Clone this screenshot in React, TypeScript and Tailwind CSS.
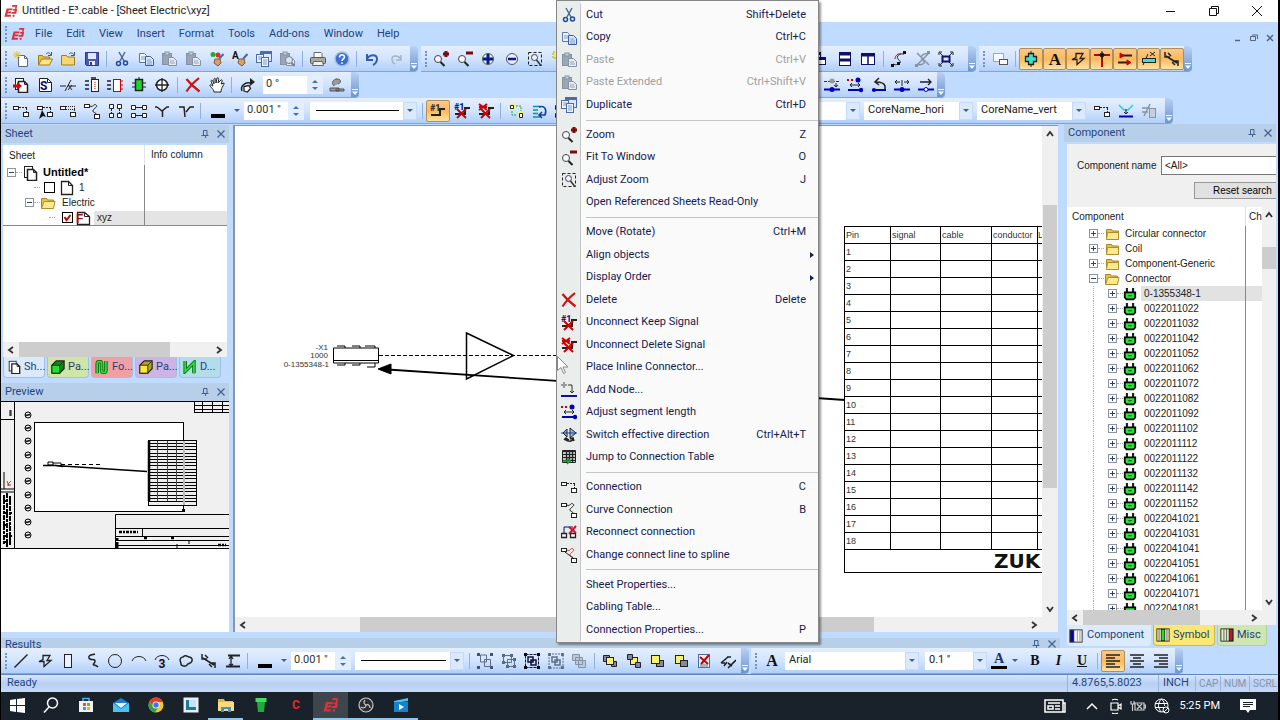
import type { ReactNode } from "react";

/* ============================================================================
   E³.cable — schematic editor with docked panels and the open context menu.
   ========================================================================== */

/* ---------------------------------------------------------------- icons --- */

const X_RED = <path d="M3 6l9 9M12 6l-9 9" stroke="#c00" strokeWidth="2" />;
const SMALL_BOXES = (
  <>
    <rect x="0.5" y="3.5" width="5" height="3" fill="#fff" />
    <rect x="10.5" y="9.5" width="5" height="4" fill="#fff" />
  </>
);
const CURVE_BOXES = (
  <>
    <rect x="0.5" y="1.5" width="5" height="3" fill="#fff" />
    <rect x="10.5" y="11.5" width="5" height="4" fill="#fff" />
  </>
);
const CLIPBOARD = (
  <>
    <rect x="1.5" y="2.5" width="9" height="11" fill="#9aa5b5" stroke="#8592a5" />
    <rect x="4" y="1" width="4" height="3" fill="#c9d0da" stroke="#8592a5" />
    <path d="M7.5 6.5h5l3 3v5h-8z" fill="#e6eaf0" stroke="#8592a5" />
    <path d="M9 10h4M9 12h5" stroke="#9aa5b5" />
  </>
);
const MAGNIFIER = (
  <>
    <circle cx="5" cy="8" r="3.5" fill="#f4f8ff" stroke="#444" />
    <path d="M7.5 11l4 4" stroke="#222" strokeWidth="2" />
  </>
);
const SHEETS = (
  <>
    <rect x="2.5" y="1.5" width="8" height="11" fill="#fff" />
    <path d="M5.5 4.5h6l3 3v8h-9z" fill="#fff" strokeWidth="1.5" />
    <path d="M11.5 4.5v3h3" />
  </>
);
const SEGMENT = (
  <>
    <path d="M0 12.5h16" stroke="#0000b8" strokeWidth="2" />
    <circle cx="8" cy="12.5" r="2.5" fill="#0000b8" stroke="none" />
  </>
);
const E3_MARK = (
  <g fill="#d9343c" stroke="none">
    <path d="M3 5h7l-.6 2.2H5.2L4.800 8.6h3.7L8 10.6H4.2l-.4 1.6h4.4L7.6 14.5H.5z" />
    <path d="M9.5 1h5.8l-1 4.3 .6 1.2-1 4.5H8.4l.5-2h3l.4-1.7h-2.2l.4-1.7h2.2L13 3H9z" />
    <circle cx="11" cy="13.5" r="1.3" />
  </g>
);
const GROUP_FRAME = (
  <path d="M0 0h3v3H0zM13 0h3v3h-3zM0 13h3v3H0zM13 13h3v3h-3z" fill="currentColor" stroke="none" />
);

const ICONS: Record<string, ReactNode> = {
  e3: E3_MARK,
  new: (
    <>
      <path d="M5.5 4.5h6l3 3v8h-9z" fill="#fff" stroke="#5a6a85" />
      <path d="M11.5 4.5v3h3" stroke="#5a6a85" />
      <path d="M4 0v8M0 4h8M1 1l6 6M7 1L1 7" stroke="#e3c424" />
    </>
  ),
  open: (
    <>
      <path d="M1.5 14V4.5h4l1 1.5h6v3" fill="#e9c04a" stroke="#a67c14" />
      <path d="M1.5 14l3-6h11l-3 6z" fill="#ffe48a" stroke="#a67c14" />
      <path d="M9 3c2-2 4-1 5 1M14.5 1v3.5H11" stroke="#2a5ba8" />
    </>
  ),
  folderUp: (
    <>
      <path d="M1.5 14V4.5h5l1 1.5h7v8z" fill="#f5d772" stroke="#a67c14" />
      <path d="M9 3c2-2 4-1 5 1M14.5 1v3.5H11" stroke="#2a5ba8" />
    </>
  ),
  save: (
    <>
      <path d="M1.5 1.5h13v13h-12l-1-1z" fill="#4b57b8" stroke="#2e3788" />
      <rect x="4" y="2" width="8" height="6" fill="#dfe9fa" stroke="none" />
      <rect x="5" y="10" width="6" height="4" fill="#eee" stroke="none" />
      <rect x="6" y="11" width="2" height="3" fill="#2e3788" stroke="none" />
    </>
  ),
  cut: (
    <>
      <path d="M5 1l5 9M11 1L6 10" stroke="#4b6a9c" strokeWidth="1.5" />
      <circle cx="4.5" cy="12.5" r="2" stroke="#1f4a96" strokeWidth="1.5" />
      <circle cx="11.5" cy="12" r="2" stroke="#1f4a96" strokeWidth="1.5" />
    </>
  ),
  copy: (
    <>
      <path d="M1.5 2.5h5l2 2v7h-7z" fill="#eef4ff" stroke="#5a78ad" />
      <path d="M7.5 5.5h5l3 3v6h-8z" fill="#d8e6ff" stroke="#3c5e9c" />
      <path d="M3 6h4M3 8h4M9 9h4M9 11h5M9 13h5" stroke="#7d9bd0" />
    </>
  ),
  paste: CLIPBOARD,
  colorBrush: (
    <>
      <circle cx="4" cy="3.5" r="2.5" fill="#1fae2c" stroke="none" />
      <circle cx="9" cy="4" r="2.5" fill="#d93232" stroke="none" />
      <path d="M14.5 3L10 8" stroke="#4b6a9c" strokeWidth="2" />
      <path d="M6 8l5 0 1 4-3 3-4-3z" fill="#d9a066" stroke="#8a5a2b" />
    </>
  ),
  textBrush: (
    <>
      <text x="0" y="8" fontSize="10" fontWeight="bold" fill="#111" stroke="none">A</text>
      <path d="M15.5 3L11 8" stroke="#4b6a9c" strokeWidth="2" />
      <path d="M7 8l5 0 1 4-3 3-4-3z" fill="#d9a066" stroke="#8a5a2b" />
    </>
  ),
  duplicate: (
    <>
      <rect x="4.5" y="0.5" width="11" height="10" fill="#dbe7fb" stroke="#4b6ca8" />
      <path d="M5 2h10" stroke="#4b6ca8" strokeWidth="2" />
      <rect x="0.5" y="3.5" width="7" height="8" fill="#eef4ff" stroke="#4b6ca8" />
      <rect x="5.5" y="6.5" width="7" height="9" fill="#eef4ff" stroke="#4b6ca8" />
      <path d="M2 6h4M2 8h3M7 9h4M7 11h4M7 13h4" stroke="#7d9bd0" />
    </>
  ),
  findPage: (
    <>
      {CLIPBOARD}
      <circle cx="10" cy="9" r="3.5" fill="#dfe5ee" stroke="#77839a" />
      <path d="M12.5 12l3 3" stroke="#77839a" strokeWidth="2" />
    </>
  ),
  print: (
    <>
      <path d="M4 6V1.5h7l1 1V6" fill="#fff" stroke="#666" />
      <rect x="0.5" y="6.5" width="15" height="6" rx="1" fill="#a9a9a0" stroke="#555" />
      <path d="M3.5 10.5h9l1 4h-11z" fill="#eee" stroke="#666" />
    </>
  ),
  help: (
    <>
      <circle cx="8" cy="8" r="7" fill="#3c6fd0" stroke="#a9bfe6" strokeWidth="1.5" />
      <path d="M5.5 6.5c0-3.5 5-3.5 5-.5 0 2-2.5 1.8-2.5 4M8 11.5v1.5" stroke="#fff" strokeWidth="1.6" />
    </>
  ),
  undo: <path d="M3 3v6h6M3 8c3-5 10-5 10 0 0 3-2 5-4 6" stroke="#3060b0" strokeWidth="2" />,
  redo: <path d="M13 4v5H8M13 8C10 4 4 4 4 8c0 3 1 4 3 5" stroke="#a9b4c6" strokeWidth="1.5" />,
  zoomIn: (
    <>
      {MAGNIFIER}
      <path d="M13 0v6M10 3h6" stroke="#7c0a0a" strokeWidth="3" />
    </>
  ),
  zoomOut: (
    <>
      {MAGNIFIER}
      <path d="M9 2h7" stroke="#7c0a0a" strokeWidth="3" />
    </>
  ),
  plusCircle: (
    <>
      <circle cx="8" cy="8" r="5.5" fill="#e8eefc" stroke="#555" />
      <path d="M8 3v10M3 8h10" stroke="#0a1a8a" strokeWidth="3" />
    </>
  ),
  minusCircle: (
    <>
      <circle cx="8" cy="8" r="5.5" fill="#e8eefc" stroke="#555" />
      <path d="M4 8h8" stroke="#0a1a8a" strokeWidth="2.5" />
    </>
  ),
  adjustZoom: (
    <>
      <rect x="1.5" y="1.5" width="13" height="13" strokeDasharray="3 2" />
      <circle cx="7.5" cy="6.5" r="3" fill="#eef4ff" stroke="#444" />
      <path d="M9.5 9l4 5" stroke="#333" strokeWidth="1.5" />
    </>
  ),
  yellowTool: (
    <>
      <rect x="2" y="1" width="6" height="6" fill="#f6ee60" stroke="#b8a820" strokeDasharray="2 1" />
      <rect x="7.5" y="8.5" width="5" height="6" />
    </>
  ),
  cascade: (
    <>
      <rect x="0.5" y="1.5" width="7" height="5" fill="#fff" stroke="#10106a" />
      <rect x="4.5" y="6.5" width="8" height="7" fill="#fff" stroke="#10106a" />
      <path d="M1 3h7M5 8h8" stroke="#10106a" strokeWidth="2" />
    </>
  ),
  tileH: (
    <>
      <rect x="2.5" y="1.5" width="11" height="13" fill="#fff" stroke="#10106a" />
      <path d="M2 3h12M2 9h12" stroke="#10106a" strokeWidth="3" />
    </>
  ),
  tileV: (
    <>
      <rect x="1.5" y="2.5" width="13" height="11" fill="#fff" stroke="#10106a" />
      <path d="M1 4h14" stroke="#10106a" strokeWidth="3" />
      <path d="M8 2v12" stroke="#10106a" strokeWidth="1.5" />
    </>
  ),
  splineTool: (
    <>
      <path d="M2 13c4 2 10-1 6-4s0-7 5-6" />
      <path d="M4 8c0-4 4-6 6-5" stroke="#c00" />
      <path d="M12 0h3v3h-3zM0 13h3v3H0zM6 11h3v3H6z" fill="#111" stroke="none" />
    </>
  ),
  splineOff: (
    <>
      <path d="M2 13c4 2 10-1 6-4s0-7 5-6M2 2l12 12M14 2L2 14" stroke="#8793a5" strokeWidth="1.5" />
      <path d="M12 0h3v3h-3zM0 13h3v3H0z" fill="#8793a5" stroke="none" />
    </>
  ),
  fitFrame: (
    <>
      <path d="M1 4V1h3M12 1h3v3M1 12v3h3M12 15h3v-3M2 2l3 3M14 2l-3 3M2 14l3-3M14 14l-3-3" />
      <rect x="4.5" y="5.5" width="7" height="5" fill="#dbe7fb" stroke="#10106a" strokeWidth="2" />
    </>
  ),
  windows: (
    <>
      <rect x="1.5" y="2.5" width="10" height="8" fill="#f6f9ff" stroke="#9aa9c0" />
      <rect x="7.5" y="8.5" width="8" height="5" fill="#fff" stroke="#555" />
    </>
  ),
  chip: (
    <>
      <path d="M5.5 2.5h5v3h3v5h-3v3h-5v-3h-3v-5h3z" fill="#3fe0d0" strokeWidth="1.3" />
      <path d="M8 0v2M8 14v2" />
    </>
  ),
  textA: (
    <text x="8" y="14" textAnchor="middle" fontFamily="Liberation Serif, serif" fontSize="17" fontWeight="bold" fill="#111" stroke="none">
      A
    </text>
  ),
  polygon: <path d="M6 2.5h7l-3 5h4l-7 6v-5H2l4-2z" strokeWidth="1.3" />,
  junction: (
    <>
      <path d="M0 4h16M8 4v12" stroke="#c00" strokeWidth="2" />
      <path d="M8 0v8M4 4h8" />
      <circle cx="8" cy="4" r="2" fill="#111" />
    </>
  ),
  arrowsRed: (
    <>
      <path d="M5 4.5h10M1 11.5h10" stroke="#222" strokeWidth="2" />
      <path d="M3 2l4 2.5L3 7zM10 9l4 2.5-4 2.5z" fill="#c00" stroke="#c00" />
    </>
  ),
  ruler: (
    <>
      <path d="M2 14L7 3M9 5l5-4M9 1l5 4" />
      <rect x="1.5" y="7.5" width="13" height="4" fill="#3fe0d0" />
    </>
  ),
  measure: (
    <path d="M2 5l11 7M1 1v5h5M4 2l3 3M14 15v-5H9M11 14l-3-3" strokeWidth="1.5" />
  ),
  importSheet: (
    <>
      {SHEETS}
      <path d="M0 9h5" stroke="#d00" strokeWidth="3" />
      <path d="M4 5l5 4-5 4z" fill="#d00" stroke="none" />
    </>
  ),
  sSheet: (
    <>
      <path d="M2.5 1.5h8l4 4v9h-12z" fill="#fff" />
      <path d="M10.5 1.5v4h4" />
      <text x="3" y="13" fontSize="12" fontWeight="bold" fill="#0a0a6a" stroke="none">S</text>
    </>
  ),
  wireLabel: <path d="M0 9h6M9 9h7M5 14l6-11M8 13l4-5M8 8l4 5" />,
  blockDark: (
    <>
      <rect x="7.5" y="2.5" width="7" height="12" fill="#fff" />
      <path d="M1 4h4M1 8h4M1 12h4M7 1h5" strokeWidth="1.5" />
      <path d="M11 5v7" stroke="#c00" strokeDasharray="1 1" />
    </>
  ),
  blockRed: (
    <>
      <rect x="6.5" y="2.5" width="7" height="12" fill="#fff" stroke="#c00" />
      <path d="M0 4h4M0 8h4M0 12h4" strokeWidth="1.5" />
      <path d="M14 4h2M14 8h2M14 12h2" stroke="#c00" />
    </>
  ),
  blockGreen: (
    <>
      <rect x="4.5" y="2.5" width="7" height="11" fill="#1ed62e" strokeWidth="1.5" />
      <path d="M1 6h3M1 10h3M12 6h3M12 10h3M8 0v2" />
    </>
  ),
  target: (
    <>
      <circle cx="8" cy="8" r="5.5" fill="#fff" strokeWidth="1.5" />
      <path d="M8 1v14M1 8h14" strokeWidth="1.3" />
    </>
  ),
  delete: <path d="M1.5 2c3 4 7 8 13 12.5M14 1C9 5 5 9 1.5 14.5" stroke="#cc1111" strokeWidth="2.2" />,
  hand: (
    <path
      d="M5 15c0-3-5-6-4-7s2 1 3 1L2 4c1-2 2 0 3 3L5 2c1-2 2 0 2 4l1-5c2-1 2 1 1 5l3-3c2-1 1 2 0 4l3-1c1 1-3 4-3 9z"
      fill="#fff"
    />
  ),
  rotate: (
    <>
      <path d="M3 14c-2-5 3-9 8-8" strokeWidth="1.5" />
      <path d="M11 1l5 4-5 4z" fill="#222" stroke="none" />
      <path d="M5 9.5l5-1 1.5 3-3 3.500-3.500-1z" fill="#fff" strokeWidth="1.3" />
    </>
  ),
  stamp: (
    <path d="M5 9c-3-3-1-7 3-7 5 0 4 4 1 5M1 11h9v3H1zM7 12h8v2H7z" fill="#9a9a9a" stroke="#555" />
  ),
  conn: (
    <>
      {SMALL_BOXES}
      <path d="M6 4.5h8M13.5 5v4" strokeDasharray="2 1" />
    </>
  ),
  connPick: (
    <>
      {SMALL_BOXES}
      <path d="M6 4.5h8M13.5 5v4" strokeDasharray="2 1" />
      <path d="M5 7l4 7-3-1-4 3z" fill="#111" stroke="none" />
    </>
  ),
  connMulti: (
    <>
      {SMALL_BOXES}
      <path d="M6 3.5h9M6 6.5h9M14.5 5v4" strokeDasharray="1 1" />
    </>
  ),
  curve: (
    <>
      {CURVE_BOXES}
      <path d="M6 3c3 2 4-3 6-1 3 2-4 4-3 6 0 2 3 1 3 3" />
    </>
  ),
  fourV: (
    <>
      <path d="M2.5 1.5h4v4h-4zM10.5 1.5h4v4h-4zM2.5 10.5h4v4h-4zM10.5 10.5h4v4h-4z" fill="#fff" />
      <path d="M4.5 6v5M12.5 6v5" strokeDasharray="2 1" />
    </>
  ),
  fourH: (
    <>
      <path d="M0.5 2.5h4v4h-4zM11.5 2.5h4v4h-4zM0.5 10.5h4v4h-4zM11.5 10.5h4v4h-4z" fill="#fff" />
      <path d="M5 4.5h6M5 12.5h6" />
    </>
  ),
  branchY: <path d="M3 4l5 4 5-4h2M1 4h2M8.500 8v6" strokeWidth="1.5" />,
  branchR: <path d="M1 4h5l1 10M8 9l4-5h4" strokeWidth="1.5" />,
  lineColor: <rect x="1" y="11" width="14" height="4" fill="#000" stroke="none" />,
  signal: (
    <>
      <text x="0" y="8" fontSize="9" fontWeight="bold" fill="#222" stroke="none">#1</text>
      <path d="M1 12h9V6h5" strokeWidth="2" />
    </>
  ),
  unconnectKeep: (
    <>
      <text x="0" y="7" fontSize="9" fontWeight="bold" fill="#0a0a6a" stroke="none">#1</text>
      <path d="M1 11h10V5h5" strokeWidth="2" />
      {X_RED}
    </>
  ),
  unconnectDelete: (
    <>
      <path d="M1 11h10V5h5" strokeWidth="2" />
      <path d="M1 1l8 6M9 1L1 7M1 4h8" stroke="#c00" strokeWidth="2" />
      {X_RED}
    </>
  ),
  routeYellow: (
    <>
      <path d="M1 1h6v6H1zM10 8h5v7h-5z" fill="#f3f080" stroke="none" />
      <path d="M2.5 2.5h3v3h-3zM11.5 10.5h3v4h-3z" fill="#fff" />
      <path d="M8 3h5v5M4 8v4h5" stroke="#16a34a" strokeDasharray="2 1" />
    </>
  ),
  swap: (
    <>
      <path d="M1 3.5h7M1 7h5M1 10.500h5M1 14h7" stroke="#099" strokeWidth="1.5" />
      <path d="M7 4c6-2 8 3 6 8H8M10 9l-3 3 3 3" stroke="#123c9a" strokeWidth="1.5" />
    </>
  ),
  addNode: (
    <>
      <path d="M3 0v6M0 3h6" stroke="#9a9a9a" strokeWidth="2" />
      <path d="M7 3h4v8M9 9l2 2 2-2" stroke="#333" />
      <path d="M0 14h16" stroke="#10109a" strokeWidth="2" />
    </>
  ),
  segMove: (
    <>
      {SEGMENT}
      <path d="M0 4.500h16" stroke="#334" strokeDasharray="3 1" />
      <circle cx="8" cy="4" r="2.500" fill="#999" stroke="none" />
      <path d="M12 6v4M10 8l2 2 2-2" />
    </>
  ),
  segLength: (
    <>
      <path d="M0 3h7" stroke="#c00" strokeWidth="2" strokeDasharray="2 2" />
      <circle cx="11" cy="3" r="2.5" fill="#0000c0" stroke="none" />
      <path d="M3 8h10M5 6L3 8l2 2M11 6l2 2-2 2" />
      <path d="M1 13h13" stroke="#0000b8" strokeWidth="2" />
      <circle cx="14" cy="13" r="2.2" fill="#0000c0" stroke="none" />
    </>
  ),
  segBack: (
    <>
      <path d="M14 13V9c-1-4-7-4-9-4M8 1L4 5l4 3" strokeWidth="1.5" />
      <path d="M1 13h14" stroke="#0000b8" strokeWidth="2" />
      <circle cx="3" cy="13" r="2" fill="#0000c0" stroke="none" />
    </>
  ),
  segSplit: (
    <>
      {SEGMENT}
      <path d="M1 5h5M10 5h5M3 3L1 5l2 2M13 3l2 2-2 2M8 3v6" />
    </>
  ),
  segOpen: (
    <>
      <path d="M2 5h11M10 2l3 3-3 3" strokeWidth="1.3" />
      <path d="M0 12.5h16" stroke="#0000b8" strokeWidth="2" />
      <circle cx="8" cy="12.5" r="2" fill="#fff" stroke="#0000b8" />
    </>
  ),
  direction: (
    <>
      <path d="M2 6l4-4v8zM15 6L9 1v10z" fill="#9db6d8" />
      <path d="M0 6h16" stroke="#123c9a" />
      <path d="M4 11c1 4 7 4 8 1M3 13l2-2 3 2M13 14l-1-3-3 1" strokeWidth="1.5" />
    </>
  ),
  table: (
    <>
      <path d="M1.500 1.500h13v12h-13z" fill="#fff" />
      <path d="M2 2.500h12M2 5.500h12M2 8.500h12M2 11.500h12M5.500 2v11M8.500 2v11M11.500 2v11" strokeWidth="1.300" />
      <path d="M2 12h6M6 9l3 3-3 3" stroke="#17a333" strokeWidth="1.500" />
    </>
  ),
  reconnect: (
    <>
      <path d="M3 10V3h9" stroke="#10106a" />
      <path d="M0.5 9.5h5v4h-5zM9.5 9.5h5v4h-5z" fill="#fff" strokeWidth="1.3" />
      <path d="M8 3l7 6M15 2l-7 8" stroke="#d01030" strokeWidth="2" />
    </>
  ),
  toSpline: (
    <>
      {CURVE_BOXES}
      <path d="M6 3c3 2 4-3 6-1 3 2-4 4-3 6 0 2 3 1 3 3" stroke="#d33" />
      <path d="M4 5l8 6" />
    </>
  ),
  coreDown: (
    <>
      <path d="M1 2l5 5h4l5-5" stroke="#22cfe0" strokeWidth="1.5" />
      <path d="M8 6v5M6 9l2 2 2-2" />
      <path d="M1 13.5h14" stroke="#0000b8" strokeWidth="2" />
    </>
  ),
  coreOff: (
    <>
      <path d="M1 5h8M1 9h6M3 13L9 1" stroke="#8793a5" strokeWidth="1.5" />
      <rect x="8.5" y="5.5" width="6" height="9" fill="#c5cfdd" stroke="#8793a5" />
    </>
  ),
  line: <path d="M1.5 14.5l13-13" strokeWidth="1.5" />,
  rect: <rect x="4.5" y="1.5" width="7" height="13" fill="#eaf2ff" />,
  spline: <path d="M11 1c-4 1-7 1-6 4s6 0 6 3-3 3-1 4 2 0 4 2" strokeWidth="1.5" />,
  circle: <circle cx="8" cy="8" r="6.5" />,
  arc: <path d="M1 8c2-6 12-6 14 0" />,
  arc3: (
    <>
      <path d="M1 7c2-6 12-6 14 0" />
      <text x="8" y="15" textAnchor="middle" fontSize="12" fontWeight="bold" fill="#111" stroke="none">3</text>
    </>
  ),
  cloud: <path d="M5 4c3-3 5 0 6 0s4 1 3 4-4 2-5 4-6 1-6-1-3-6 2-7z" strokeWidth="1.5" />,
  height: (
    <>
      <path d="M3 2.5h12M1 13.5h14" strokeWidth="2" />
      <path d="M6 4v9M4 6l2-3 2 3M4 11l2 2 2-2" strokeWidth="1.3" />
    </>
  ),
  group: (
    <g className="text-slate-600">
      {GROUP_FRAME}
      <path d="M3.5 2h6v7h-6zM7.5 6.5h6v7h-6z" stroke="#5f6f88" />
    </g>
  ),
  ungroup: (
    <>
      <path d="M1 1h3v3H1zM9 1h3v3H9zM1 8h3v3H1zM12 12h3v3h-3zM5 12h3v3H5zM12 5h3v3h-3z" fill="#55647c" stroke="none" />
      <path d="M2.5 2.5h8v7h-8zM6.5 6.5h7v7h-7z" stroke="#5f6f88" />
    </>
  ),
  groupAll: (
    <g className="text-black">
      {GROUP_FRAME}
      <path d="M1.500 1.500h13v13h-13z" stroke="#10103a" strokeDasharray="3 1" />
      <path d="M4 4h5v5H4zM7 7h5v5H7z" stroke="#10103a" strokeWidth="1.5" />
    </g>
  ),
  groupDash: (
    <g className="text-slate-500">
      {GROUP_FRAME}
      <path d="M1 1h14v14H1z" stroke="#5f6f88" strokeDasharray="2 1" />
      <path d="M4 4h5v5H4zM7 7h5v5H7z" stroke="#5f6f88" strokeWidth="1.5" />
    </g>
  ),
  copies: (
    <path d="M1.5 1.5h7v6h-7zM4.5 4.5h7v7h-7zM7.5 7.5h7v7h-7z" fill="#bcc9dc" stroke="#8793a5" />
  ),
  toFront: (
    <>
      <path d="M1.5 2.5h6v6h-6zM9.5 8.5h5v5h-5z" fill="#808a9a" />
      <rect x="4.5" y="4.5" width="7" height="7" fill="#f8f36a" />
    </>
  ),
  toBack: (
    <>
      <rect x="4.5" y="4.5" width="7" height="7" fill="#f8f36a" />
      <path d="M1.5 1.5h5v5h-5zM9.5 9.5h5v5h-5z" fill="#808a9a" />
    </>
  ),
  forward: (
    <>
      <rect x="7.5" y="7.5" width="7" height="6" fill="#808a9a" />
      <rect x="2.5" y="2.5" width="8" height="8" fill="#f8f36a" />
    </>
  ),
  backward: (
    <>
      <rect x="2.5" y="2.5" width="8" height="8" fill="#f8f36a" />
      <rect x="7.5" y="7.5" width="7" height="6" fill="#808a9a" />
    </>
  ),
  report: (
    <>
      <rect x="2.5" y="1.5" width="11" height="13" fill="#e9eef8" stroke="#4b6ca8" />
      <path d="M4 12h8M4 14h8" stroke="#777" />
      <path d="M4 4l8 7M13 2L5 11" stroke="#c00" strokeWidth="2" />
    </>
  ),
  hatch: <path d="M1 10l7-6M4 13l3-4M8 15l8-8M11 4l-4 0M1 10h4M8 10l4 3" strokeWidth="1.6" />,
  alignLeft: <path d="M1 2h14M1 5h9M1 8h14M1 11h9M1 14h14" strokeWidth="1.7" />,
  alignCenter: <path d="M1 2h14M4 5h8M1 8h14M4 11h8M1 14h14" strokeWidth="1.7" />,
  alignRight: <path d="M1 2h14M6 5h9M1 8h14M6 11h9M1 14h14" strokeWidth="1.7" />,
  sheets: SHEETS,
  page: (
    <>
      <path d="M2.5 1.5h7l4 4v9h-11z" fill="#fff" strokeWidth="1.3" />
      <path d="M9.5 1.5v4h4" />
    </>
  ),
  pageF: (
    <>
      <path d="M2.5 2.5h7l5 4v8h-12z" fill="#fff" strokeWidth="1.3" />
      <path d="M9.5 2.5v4h5" />
      <text x="1" y="13" fontSize="12" fontWeight="bold" fill="#a01020" stroke="none">F</text>
    </>
  ),
  folder: (
    <>
      <path d="M1.5 13V3.5h5l1 1.5h6v8z" fill="#e8c34a" stroke="#a5832a" />
      <path d="M1.5 13.5L4 6.5h11l-1.5 7z" fill="#ffe98f" stroke="#b08d2c" />
    </>
  ),
  folderClosed: (
    <>
      <path d="M2.5 13V3.5h5l1 1.5h6v8z" fill="#e8c34a" stroke="#a5832a" />
      <path d="M2.5 13.5l1-7h11v7z" fill="#ffe98f" stroke="#b08d2c" />
    </>
  ),
  plug: (
    <>
      <path d="M4.5 1v5M11.5 1v5" strokeWidth="2.5" />
      <path d="M2 6h12v6l-2 2H4l-2-2z" fill="#26e636" stroke="#000" strokeWidth="2" />
      <path d="M6 10h4" />
    </>
  ),
  cubeGreen: (
    <>
      <path d="M1 6l5-5h9v9l-5 5H1z" fill="#0c8a16" strokeWidth="1.3" />
      <path d="M1 6h9v9H1z" fill="#1ee02e" />
      <path d="M10 6l5-5" />
    </>
  ),
  cubeYellow: (
    <>
      <path d="M1 6l5-5h9v9l-5 5H1z" fill="#b3a31a" strokeWidth="1.3" />
      <path d="M1 6h9v9H1z" fill="#fbea35" />
      <path d="M10 6l5-5" />
    </>
  ),
  coil: (
    <>
      <path d="M2.5 15V4c0-3 5-3 5 0v8c0 3 5 3 5 0V1" stroke="#0a6a12" strokeWidth="4" />
      <path d="M2.5 15V4c0-3 5-3 5 0v8c0 3 5 3 5 0V1" stroke="#25e03a" strokeWidth="2" />
    </>
  ),
  zig: (
    <>
      <path d="M2.5 1v12l10-10v12" stroke="#0a6a12" strokeWidth="4" />
      <path d="M2.5 1v12l10-10v12" stroke="#25e03a" strokeWidth="2" />
    </>
  ),
  bookBlue: (
    <>
      <rect x="1" y="1" width="14" height="14" fill="#fff" stroke="#222" />
      <rect x="1.5" y="1.5" width="4" height="13" fill="#0000c0" />
      <path d="M9.5 1v14M12.5 1v14" stroke="#888" />
    </>
  ),
  bookGreen: (
    <>
      <rect x="1" y="1" width="14" height="14" fill="#fff7c0" stroke="#222" />
      <rect x="6" y="1.5" width="4" height="13" fill="#1ee02e" />
      <path d="M3.5 1v14M12.5 1v14" stroke="#555" />
    </>
  ),
  bookRed: (
    <>
      <rect x="1" y="1" width="14" height="14" fill="#dff0c8" stroke="#222" />
      <rect x="10.5" y="1.5" width="4" height="13" fill="#d01020" />
      <path d="M4.5 1v14M7.5 1v14" stroke="#555" />
    </>
  ),
};

function Icon({ name, className = "size-4" }: { name: string; className?: string }) {
  return (
    <svg viewBox="0 0 16 16" className={`${className} shrink-0`} fill="none" stroke="#222" aria-hidden="true">
      {ICONS[name]}
    </svg>
  );
}

/* ------------------------------------------------------ toolbar widgets --- */

function Tools({ names, active = false }: { names: string[]; active?: boolean }) {
  return (
    <div className="flex shrink-0 items-center">
      {names.map((name) => (
        <button
          key={name}
          type="button"
          aria-label={name}
          className={`flex h-[22px] items-center justify-center odd:w-6 even:w-[23px] ${
            active ? "rounded-xs border border-[#b08f5c] bg-linear-to-b from-[#fcc98a] via-[#fbb95c] to-[#fde3a0]" : ""
          }`}
        >
          <Icon name={name} />
        </button>
      ))}
    </div>
  );
}

function Sep() {
  return <span className="mx-[3px] h-4 w-px shrink-0 bg-[#8fb0e0]" />;
}

/** One docked toolbar strip: grip on the left, overflow tab on the right. */
function Toolbar({ children, className = "" }: { children: ReactNode; className?: string }) {
  return (
    <div
      role="toolbar"
      className={`flex h-[26px] shrink-0 items-center rounded-r-sm border-b border-[#7fa6dc] bg-linear-to-b from-[#e4effe] via-[#d3e4fd] to-[#b1cffa] ${className}`}
    >
      <span className="mr-0.5 ml-1 h-4 w-0 border-l-2 border-dotted border-[#7193c4]" />
      <div className="flex min-w-0 flex-1 items-center">{children}</div>
      <span className="flex h-full w-2 shrink-0 items-end justify-center rounded-r-sm bg-linear-to-b from-[#b9d1f5] to-[#6b95d0] pb-0.5">
        <svg viewBox="0 0 6 6" className="size-1.5" fill="#fff" aria-hidden="true">
          <path d="M0 0h6v1H0zM0 2.5h6L3 6z" />
        </svg>
      </span>
    </div>
  );
}

function Spin({ label, value, unit }: { label: string; value: string; unit: string }) {
  return (
    <div className="flex h-[18px] w-[60px] shrink-0 items-center bg-white">
      <input
        aria-label={label}
        defaultValue={`${value} ${unit}`}
        className="w-[44px] min-w-0 bg-transparent pl-[3px] text-[11px] text-[#333] outline-none"
      />
      <span className="flex h-full w-4 flex-col items-center justify-evenly bg-[#e2edfd]">
        <svg viewBox="0 0 6 3" className="h-[3px] w-1.5" fill="#4b6fa8" aria-hidden="true">
          <path d="M0 3l3-3 3 3z" />
        </svg>
        <svg viewBox="0 0 6 3" className="h-[3px] w-1.5" fill="#4b6fa8" aria-hidden="true">
          <path d="M0 0l3 3 3-3z" />
        </svg>
      </span>
    </div>
  );
}

function Combo({
  label,
  value,
  className,
  line = false,
}: {
  label: string;
  value: string;
  className: string;
  line?: boolean;
}) {
  return (
    <div className={`relative flex h-[18px] shrink-0 items-center bg-white ${className}`}>
      <select
        aria-label={label}
        className="h-full w-full appearance-none bg-transparent pr-4 pl-1 text-[11px] text-[#222] outline-none"
      >
        <option>{value}</option>
      </select>
      {line && <span className="absolute inset-x-1.5 mr-3 h-px bg-black" />}
      <span className="pointer-events-none absolute right-0 flex h-full w-3.5 items-center justify-center border border-[#c5daf8] bg-[#dbe9fd]">
        <Caret />
      </span>
    </div>
  );
}

function Caret() {
  return (
    <svg viewBox="0 0 6 3" className="h-[3px] w-1.5 shrink-0" fill="#3f5f95" aria-hidden="true">
      <path d="M0 0h6L3 3z" />
    </svg>
  );
}

/* --------------------------------------------------------------- chrome --- */

const MENUS = ["File", "Edit", "View", "Insert", "Format", "Tools", "Add-ons", "Window", "Help"];

function TitleBar() {
  return (
    <header className="shrink-0">
      <div className="flex h-[22px] items-center bg-white pr-4 pl-[3px]">
        <Icon name="e3" className="size-3.5" />
        <h1 className="ml-1 text-[11px] text-[#222]">Untitled - E³.cable - [Sheet Electric\xyz]</h1>
        <div className="ml-auto flex items-center gap-[33px]">
          <button type="button" aria-label="Minimize">
            <svg viewBox="0 0 10 10" className="size-2.5" stroke="#111" aria-hidden="true">
              <path d="M0 5.5h9" />
            </svg>
          </button>
          <button type="button" aria-label="Restore">
            <svg viewBox="0 0 10 10" className="size-2.5" fill="none" stroke="#111" aria-hidden="true">
              <path d="M.5 2.5h7v7h-7zM2.5 2V.5h7v7H8" />
            </svg>
          </button>
          <button type="button" aria-label="Close">
            <svg viewBox="0 0 10 10" className="size-2.5" stroke="#111" aria-hidden="true">
              <path d="M0 0l10 10M10 0L0 10" />
            </svg>
          </button>
        </div>
      </div>
      <nav className="flex h-6 items-center pr-1 pl-1">
        <span className="h-4 border-l-2 border-dotted border-[#7193c4]" />
        <span className="mr-2.5 ml-1">
          <Icon name="e3" className="size-3.5" />
        </span>
        <div className="flex gap-3.5">
          {MENUS.map((menu) => (
            <button key={menu} type="button" className="text-[11px] text-[#23437c]">
              {menu}
            </button>
          ))}
        </div>
        <div className="mt-2 ml-auto flex gap-2 text-[#56657c]">
          <svg viewBox="0 0 8 8" className="size-2" stroke="currentColor" strokeWidth="1.5" aria-hidden="true">
            <path d="M1 6.5h5" />
          </svg>
          <svg viewBox="0 0 8 8" className="size-2" fill="none" stroke="currentColor" aria-hidden="true">
            <path d="M.5 2.5h5v4h-5zM2 1h5.5v4" />
          </svg>
          <svg viewBox="0 0 8 8" className="size-2" stroke="currentColor" strokeWidth="1.5" aria-hidden="true">
            <path d="M1 1l6 6M7 1L1 7" />
          </svg>
        </div>
      </nav>
    </header>
  );
}

function Toolbars() {
  return (
    <div className="shrink-0">
      <div className="flex gap-[3px]">
        <Toolbar className="w-[417px]">
          <Tools names={["new", "open", "folderUp", "save"]} />
          <Sep />
          <Tools names={["cut", "copy"]} />
          <Tools names={["paste"]} />
          <Tools names={["paste", "colorBrush", "textBrush", "duplicate", "findPage"]} />
          <Sep />
          <Tools names={["print", "help"]} />
          <Sep />
          <Tools names={["undo", "redo"]} />
        </Toolbar>
        <Toolbar className="w-[555px]">
          <Tools names={["zoomIn", "zoomOut", "plusCircle", "minusCircle", "adjustZoom", "yellowTool"]} />
          <div className="mr-2.5 ml-auto flex items-center">
            <Tools names={["cascade", "tileH", "tileV"]} />
            <Sep />
            <Tools names={["splineTool", "splineOff", "fitFrame"]} />
          </div>
        </Toolbar>
        <Toolbar className="w-[213px]">
          <span className="w-px" />
          <Tools names={["windows"]} />
          <Sep />
          <Tools active names={["chip", "textA", "polygon", "junction", "arrowsRed", "ruler", "measure"]} />
        </Toolbar>
      </div>
      <div className="flex">
        <Toolbar className="w-[358px]">
          <Tools names={["importSheet", "sSheet", "wireLabel", "blockDark", "blockRed", "blockGreen", "target"]} />
          <Sep />
          <Tools names={["delete", "hand"]} />
          <Sep />
          <Tools names={["rotate"]} />
          <span className="w-1" />
          <Spin label="Rotation" value="0" unit="°" />
          <span className="w-0.5" />
          <Tools names={["stamp"]} />
        </Toolbar>
        <Toolbar className="ml-auto mr-[333px] w-[180px]">
          <div className="ml-auto">
            <Tools names={["swap", "segMove", "segLength", "segBack", "segSplit", "segOpen"]} />
          </div>
        </Toolbar>
      </div>
      <Toolbar className="mr-[105px]">
        <Tools names={["conn", "connPick", "connMulti", "curve", "fourV", "fourH", "branchY", "branchR"]} />
        <Sep />
        <span className="w-0.5" />
        <Tools names={["lineColor"]} />
        <span className="flex w-3.5 justify-center">
          <Caret />
        </span>
        <Spin label="Line width" value="0.001" unit="''" />
        <span className="w-1.5" />
        <Combo label="Line style" value="" line className="w-[107px]" />
        <span className="w-0.5" />
        <Sep />
        <Tools active names={["signal"]} />
        <Tools names={["unconnectKeep", "unconnectDelete"]} />
        <Sep />
        <Tools names={["routeYellow", "swap", "fourH"]} />
        <div className="mr-1 ml-auto flex items-center gap-1">
          <Combo label="Name" value="" className="w-[107px]" />
          <Combo label="Horizontal core text" value="CoreName_hori" className="w-[109px]" />
          <Combo label="Vertical core text" value="CoreName_vert" className="w-[109px]" />
          <Tools names={["conn", "coreDown", "coreOff"]} />
        </div>
      </Toolbar>
    </div>
  );
}

/** Dock header with its pin and close glyphs. */
function DockHeader({ title }: { title: string }) {
  return (
    <div className="flex h-[18px] shrink-0 items-center bg-[#b7cfe9] px-1 text-[11px] text-[#1f4484]">
      <h2>{title}</h2>
      <DockButtons />
    </div>
  );
}

function DockButtons() {
  return (
    <div className="ml-auto flex items-center gap-2">
      <button type="button" aria-label="Auto hide">
        <svg viewBox="0 0 8 8" className="size-2" fill="none" stroke="#42608f" aria-hidden="true">
          <path d="M2.5 5V.5h3.5V5M0.5 5.5h7M4.5 5v3" />
        </svg>
      </button>
      <button type="button" aria-label="Close panel">
        <svg viewBox="0 0 8 8" className="size-2" stroke="#42608f" strokeWidth="1.2" aria-hidden="true">
          <path d="M.5.5l7 7M7.5.5l-7 7" />
        </svg>
      </button>
    </div>
  );
}

function Arrow({ dir }: { dir: "up" | "down" | "left" | "right" }) {
  const paths = {
    up: "M1 6l3-4 3 4",
    down: "M1 2l3 4 3-4",
    left: "M6 1L2 4l4 3",
    right: "M2 1l4 3-4 3",
  };
  return (
    <span className="flex size-4 shrink-0 items-center justify-center">
      <svg viewBox="0 0 8 8" className="size-2" fill="none" stroke="#333" strokeWidth="1.8" aria-hidden="true">
        <path d={paths[dir]} />
      </svg>
    </span>
  );
}

/* ---------------------------------------------------------------- trees --- */

function Expander({ open }: { open: boolean }) {
  return (
    <svg viewBox="0 0 9 9" className="size-[9px] shrink-0" fill="#fff" stroke="#8a94a6" aria-hidden="true">
      <rect x="0.5" y="0.5" width="8" height="8" />
      <path d={open ? "M2 4.5h5" : "M2 4.5h5M4.5 2v5"} stroke="#33415c" />
    </svg>
  );
}

function Dots() {
  return <span className="h-0 w-1.5 shrink-0 border-t border-dotted border-[#aaa]" />;
}

const SHEET_TABS = [
  { label: "Sh...", icon: "sheets", tone: "bg-[#dce9fb]" },
  { label: "Pa...", icon: "cubeGreen", tone: "bg-[#cfe6a8]" },
  { label: "Fo...", icon: "coil", tone: "bg-[#f0a0a4]" },
  { label: "Pa...", icon: "cubeYellow", tone: "bg-[#cdb4e6]" },
  { label: "D...", icon: "zig", tone: "bg-[#b4dcea]" },
];

function SheetPanel() {
  return (
    <section className="flex h-[255px] shrink-0 flex-col">
      <DockHeader title="Sheet" />
      <div className="mx-0.5 mt-0.5 flex min-h-0 flex-1 flex-col bg-white font-['Liberation_Sans',sans-serif] text-[10px] text-[#222]">
        <div className="flex h-5 shrink-0 items-center">
          <span className="w-[141px] pl-1.5">Sheet</span>
          <span className="border-l border-[#e4e4e4] pl-1.5 leading-5">Info column</span>
        </div>
        <ul className="relative border-b border-[#888]">
          <li className="flex h-[15px] items-center pl-1">
            <Expander open />
            <Dots />
            <Icon name="sheets" />
            <b className="ml-[5px] text-[11px] text-black">Untitled*</b>
          </li>
          <li className="flex h-[15px] items-center gap-1 pl-[31px]">
            <Dots />
            <input type="checkbox" aria-label="Sheet 1" className="size-[11px] appearance-none border border-black bg-white" />
            <Icon name="page" />
            <span>1</span>
          </li>
          <li className="flex h-[15px] items-center pl-[22px]">
            <Expander open />
            <Dots />
            <Icon name="folder" />
            <span className="ml-1.5">Electric</span>
          </li>
          <li className="flex h-[15px] items-center pl-[46px]">
            <Dots />
            <span className="relative ml-[7px] flex">
              <input
                type="checkbox"
                defaultChecked
                aria-label="Sheet xyz"
                className="size-[11px] appearance-none border border-black bg-white"
              />
              <svg viewBox="0 0 11 11" className="pointer-events-none absolute inset-0" fill="none" stroke="#c00" strokeWidth="2" aria-hidden="true">
                <path d="M2.5 5l2 3 4-5" />
              </svg>
            </span>
            <span className="w-0.5" />
            <Icon name="pageF" />
            <span className="ml-[3px] flex-1 bg-[#e4e4e4] pl-[3px] leading-[14px]">xyz</span>
          </li>
          <span className="absolute inset-y-0 left-[141px] w-px bg-[#888]" />
        </ul>
        <div className="mt-auto flex h-[15px] items-center bg-[#f0f0f0]">
          <Arrow dir="left" />
          <span className="h-full w-[151px] bg-[#cdcdcd]" />
          <span className="ml-auto">
            <Arrow dir="right" />
          </span>
        </div>
      </div>
      <div className="flex h-[23px] shrink-0 gap-0.5 pb-0.5 pl-0.5" role="tablist">
        {SHEET_TABS.map((tab, index) => (
          <button
            key={tab.icon}
            type="button"
            role="tab"
            aria-selected={index === 0}
            className={`flex w-[42px] items-center gap-[3px] rounded-b-sm border border-t-0 border-[#a5bfe4] pl-[3px] text-[11px] text-[#1f3f78] ${tab.tone}`}
          >
            <Icon name={tab.icon} className="size-3.5" />
            {tab.label}
          </button>
        ))}
      </div>
    </section>
  );
}

/** Miniature of the whole sheet with the visible area framed. */
function PreviewPanel() {
  return (
    <section className="flex min-h-0 flex-1 flex-col">
      <DockHeader title="Preview" />
      <div className="flex-1 bg-white">
        <svg viewBox="0 0 228 148" className="block h-[148px] w-full" fill="none" stroke="#000" preserveAspectRatio="none" aria-hidden="true">
          <rect width="228" height="148" fill="#f0f0f0" stroke="none" />
          <path d="M0 .5h228M0 147.5h228M13.5 0v148M0 18.5h13" />
          <path d="M0 88h13M0 91h13M3 71v17M9 9v6M10 9v6" />
          <path d="M6 80l2 5M10 80l-3 3M6 84h4" stroke="#c33" />
          <path d="M3 94v50M6 92v54M9 95v50M2 100h8M2 112h9M2 124h7M2 135h9M2 141h8" strokeWidth="2" strokeDasharray="5 1 3 1" />
          {[14, 27, 40, 54, 67, 80, 94, 107, 121, 134].map((cy) => (
            <g key={cy}>
              <circle cx="27" cy={cy} r="3" />
              <path d={`M25 ${cy + 1}l4-2M24 ${cy}h5`} />
            </g>
          ))}
          <rect x="33.5" y="21.5" width="149" height="89" fill="#fff" />
          <rect x="181" y="108" width="3" height="3" fill="#000" stroke="none" />
          <path d="M42 64.5h12l92 6M54 64.5l8 1" strokeWidth="1.3" />
          <path d="M47 61h5v3h-5zM52 62h8v3" />
          <path d="M60 63.5h42" strokeDasharray="4 3" />
          <rect x="147.5" y="39.5" width="48" height="65" fill="#eee" />
          {[42, 45, 48, 52, 55, 58, 61, 64, 68, 71, 74, 77, 81, 84, 87, 90, 94, 97, 100].map((y) => (
            <path key={y} d={`M147 ${y}.5h48`} />
          ))}
          <path d="M148 40v60" strokeWidth="2.5" />
          <path d="M156.5 40v60M166.5 40v60M175.5 40v60" stroke="#444" />
          <path d="M183 40v64" stroke="#bbb" strokeWidth="2" />
          <path d="M193.5 1v11M201.5 1v11M211.5 1v11M221.5 1v11M193 4.5h35M193 8.5h35M193 11.5h35" />
          <path d="M114.5 148v-34.5H228M114 127.5h114M114 135.5h114M114 139.5h114M114 144.5h114M141.5 128v8M188 139v4M176 143v5" />
          <path d="M116 137v10" strokeWidth="3" strokeDasharray="3 1" />
          <path d="M118 131h19M143 137h4M170 137h4M217 144h8" strokeWidth="2.5" strokeDasharray="3 1 2 1" />
        </svg>
      </div>
    </section>
  );
}

const FOLDERS = ["Circular connector", "Coil", "Component-Generic", "Connector"];
const PARTS = [
  "0-1355348-1",
  "0022011022",
  "0022011032",
  "0022011042",
  "0022011052",
  "0022011062",
  "0022011072",
  "0022011082",
  "0022011092",
  "0022011102",
  "0022011112",
  "0022011122",
  "0022011132",
  "0022011142",
  "0022011152",
  "0022041021",
  "0022041031",
  "0022041041",
  "0022041051",
  "0022041061",
  "0022041071",
  "0022041081",
];

function ComponentPanel() {
  return (
    <aside className="flex w-[212px] shrink-0 flex-col">
      <DockHeader title="Component" />
      <div className="mt-0.5 ml-[3px] flex min-h-0 flex-1 flex-col bg-[#f0f0f0] font-['Liberation_Sans',sans-serif] text-[10px] text-[#222]">
        <div className="flex h-[63px] shrink-0 flex-col gap-[7px] pt-3">
          <div className="flex items-center">
            <label htmlFor="component-name" className="w-[94px] pl-2.5">
              Component name
            </label>
            <input
              id="component-name"
              defaultValue="<All>"
              className="h-[19px] min-w-0 flex-1 border border-r-0 border-[#777] bg-white pl-[3px] outline-none"
            />
          </div>
          <button type="button" className="h-[17px] w-[82px] self-end border border-r-0 border-[#999] bg-[#e1e1e1] pl-[18px] text-left whitespace-nowrap text-black">
            Reset search
          </button>
        </div>
        <div className="flex min-h-0 flex-1 bg-white">
          <div className="relative flex min-w-0 flex-1 flex-col overflow-hidden">
            <div className="flex h-[19px] shrink-0 items-center">
              <span className="w-[179px] border-r border-[#ddd] pl-[5px] leading-[19px]">Component</span>
              <span className="pl-[3px]">Ch</span>
            </div>
            <ul>
              {FOLDERS.map((folder, index) => (
                <li key={folder} className="flex h-[15px] items-center pl-[22px]">
                  <Expander open={index === 3} />
                  <Dots />
                  <Icon name={index === 3 ? "folder" : "folderClosed"} />
                  <span className="ml-[5px]">{folder}</span>
                </li>
              ))}
              {PARTS.map((part, index) => (
                <li key={part} className="flex h-[15px] items-center pl-[26px]">
                  <span className="mr-[14px] h-full border-l border-dotted border-[#aaa]" />
                  <Expander open={false} />
                  <Dots />
                  <Icon name="plug" className="size-3.5" />
                  <span className={`ml-1 flex-1 pl-[3px] leading-[15px] ${index === 0 ? "bg-[#e2e2e2]" : ""}`}>{part}</span>
                </li>
              ))}
            </ul>
            <span className="absolute top-[19px] bottom-0 left-[178px] w-px bg-[#888]" />
          </div>
          <div className="flex w-3.5 shrink-0 flex-col items-center bg-[#f0f0f0]">
            <Arrow dir="up" />
            <span className="mt-6 h-[22px] w-full bg-[#cdcdcd]" />
            <span className="mt-auto">
              <Arrow dir="down" />
            </span>
          </div>
        </div>
        <div className="flex h-[15px] shrink-0 items-center">
          <Arrow dir="left" />
          <span className="h-full w-[117px] bg-[#cdcdcd]" />
          <span className="mr-3.5 ml-auto">
            <Arrow dir="right" />
          </span>
        </div>
      </div>
      <div className="flex h-[23px] shrink-0 gap-0.5 pb-0.5 pl-[3px] text-[11px] text-[#1f3f78]" role="tablist">
        <button type="button" role="tab" aria-selected="true" className="flex w-[84px] items-center gap-1 rounded-b-sm bg-[#dcebfc] pl-0.5">
          <Icon name="bookBlue" className="size-3.5" />
          Component
        </button>
        <button type="button" role="tab" aria-selected="false" className="flex w-[62px] items-center gap-[3px] rounded-b-sm border border-t-0 border-[#c9b95a] bg-[#fae873] pl-0.5">
          <Icon name="bookGreen" className="size-3.5" />
          Symbol
        </button>
        <button type="button" role="tab" aria-selected="false" className="flex w-[50px] items-center gap-[3px] rounded-b-sm border border-t-0 border-[#b3cf9a] bg-[#cfe5b2] pl-0.5">
          <Icon name="bookRed" className="size-3.5" />
          Misc
        </button>
      </div>
    </aside>
  );
}

/* --------------------------------------------------------------- canvas --- */

const PINS = Array.from({ length: 18 }, (_, i) => i + 1);

function Canvas() {
  return (
    <main className="mr-0.5 flex min-w-0 flex-1 flex-col border-t border-l-2 border-[#8a96a8] bg-white">
      <div className="flex min-h-0 flex-1">
        <div className="relative min-w-0 flex-1 overflow-hidden font-['Liberation_Sans',sans-serif]">
          <svg viewBox="235 126 807 490" className="absolute top-0 left-0 h-[490px] w-[807px]" fill="none" stroke="#000" aria-hidden="true">
            <path d="M379 355.5h180" strokeDasharray="4 2" />
            <path d="M466.5 333v46l47-23.5z" strokeWidth="1.5" />
            <path d="M380 369l465 31" strokeWidth="1.8" />
            <path d="M378 369l13-5v10z" fill="#000" />
            <path d="M333.5 348h45v15h-45zM334 360.5h44M337 346h8v2M352 346h8v2M365 346h10v2M337 365h8v-2M352 365h8v-2M367 367h8v-4" />
            <g fill="#333" stroke="none" fontSize="8">
              <text x="328" y="350" textAnchor="end">-X1</text>
              <text x="328" y="358" textAnchor="end">1000</text>
              <text x="329" y="367" textAnchor="end">0-1355348-1</text>
            </g>
          </svg>
          <table className="absolute top-[100px] left-[609px] w-[246px] table-fixed border-collapse text-[9px] leading-none text-[#333]">
            <thead>
              <tr className="h-[17px]">
                <th className="w-[46px] border border-black p-0 pl-px text-left font-normal">Pin</th>
                <th className="w-[50px] border border-black p-0 pl-px text-left font-normal">signal</th>
                <th className="w-[51px] border border-black p-0 pl-px text-left font-normal">cable</th>
                <th className="w-[46px] border border-black p-0 pl-px text-left font-normal">conductor</th>
                <th className="border border-black p-0 text-left font-normal">L</th>
              </tr>
            </thead>
            <tbody>
              {PINS.map((pin) => (
                <tr key={pin} className="h-[17px]">
                  <td className="border border-black p-0 pl-px">{pin}</td>
                  <td className="border border-black p-0" />
                  <td className="border border-black p-0" />
                  <td className="border border-black p-0" />
                  <td className="border border-black p-0" />
                </tr>
              ))}
            </tbody>
            <tfoot>
              <tr className="h-[23px]">
                <td colSpan={5} className="border border-black p-0 pl-[149px] font-['DejaVu_Sans',sans-serif] text-[20px] leading-none font-bold text-[#111]">
                  ZUK
                </td>
              </tr>
            </tfoot>
          </table>
        </div>
        <div className="flex w-4 shrink-0 flex-col bg-[#f0f0f0]">
          <Arrow dir="up" />
          <span className="mt-[63px] h-[283px] w-[14px] self-center bg-[#cdcdcd]" />
          <span className="mt-auto">
            <Arrow dir="down" />
          </span>
        </div>
      </div>
      <div className="flex h-[15px] shrink-0 items-center bg-[#f0f0f0] pr-4">
        <Arrow dir="left" />
        <span className="ml-[109px] h-full w-[514px] bg-[#cdcdcd]" />
        <span className="ml-auto">
          <Arrow dir="right" />
        </span>
      </div>
    </main>
  );
}

/* --------------------------------------------------------- context menu --- */

type MenuEntry = {
  label: string;
  keys?: string;
  icon?: string;
  disabled?: boolean;
  submenu?: boolean;
} | null;

/** null draws a separator. */
const CONTEXT_MENU: MenuEntry[] = [
  { label: "Cut", keys: "Shift+Delete", icon: "cut" },
  { label: "Copy", keys: "Ctrl+C", icon: "copy" },
  { label: "Paste", keys: "Ctrl+V", icon: "paste", disabled: true },
  { label: "Paste Extended", keys: "Ctrl+Shift+V", icon: "paste", disabled: true },
  { label: "Duplicate", keys: "Ctrl+D", icon: "duplicate" },
  null,
  { label: "Zoom", keys: "Z", icon: "zoomIn" },
  { label: "Fit To Window", keys: "O", icon: "zoomOut" },
  { label: "Adjust Zoom", keys: "J", icon: "adjustZoom" },
  { label: "Open Referenced Sheets Read-Only" },
  null,
  { label: "Move (Rotate)", keys: "Ctrl+M" },
  { label: "Align objects", submenu: true },
  { label: "Display Order", submenu: true },
  { label: "Delete", keys: "Delete", icon: "delete" },
  { label: "Unconnect Keep Signal", icon: "unconnectKeep" },
  { label: "Unconnect Delete Signal", icon: "unconnectDelete" },
  { label: "Place Inline Connector..." },
  { label: "Add Node...", icon: "addNode" },
  { label: "Adjust segment length", icon: "segLength" },
  { label: "Switch effective direction", keys: "Ctrl+Alt+T", icon: "direction" },
  { label: "Jump to Connection Table", icon: "table" },
  null,
  { label: "Connection", keys: "C", icon: "conn" },
  { label: "Curve Connection", keys: "B", icon: "curve" },
  { label: "Reconnect connection", icon: "reconnect" },
  { label: "Change connect line to spline", icon: "toSpline" },
  null,
  { label: "Sheet Properties..." },
  { label: "Cabling Table..." },
  { label: "Connection Properties...", keys: "P" },
];

function ContextMenu() {
  return (
    <div
      role="menu"
      className="absolute top-0 left-[555px] flex h-[643px] w-[263px] flex-col border border-[#868686] bg-linear-to-r from-[#e9eeec] from-[24px] to-[#fafafa] to-[24px] pt-[3px] pb-px shadow-[2px_2px_2px_rgba(0,0,0,0.4)]"
    >
      {CONTEXT_MENU.map((entry, index) =>
        entry ? (
          <button
            key={entry.label}
            type="button"
            role="menuitem"
            disabled={entry.disabled}
            className="flex min-h-0 flex-[3_3_0] items-center pr-3 text-[11px] text-[#15204f] disabled:text-[#a0a0a0]"
          >
            <span className="mr-[5px] flex h-full w-6 items-center justify-center border-r border-[#c5c5c5]">
              {entry.icon && <Icon name={entry.icon} />}
            </span>
            <span>{entry.label}</span>
            {entry.keys && <span className="ml-auto">{entry.keys}</span>}
            {entry.submenu && (
              <svg viewBox="0 0 4 6" className="-mr-2 ml-auto h-1.5 w-1" fill="#15204f" aria-hidden="true">
                <path d="M0 0l4 3-4 3z" />
              </svg>
            )}
          </button>
        ) : (
          <div key={index} role="separator" className="flex min-h-0 flex-1 items-center">
            <span className="mr-[5px] h-full w-6 border-r border-[#c5c5c5]" />
            <span className="h-px flex-1 bg-[#c5c5c5]" />
          </div>
        ),
      )}
      <svg viewBox="0 0 12 18" className="absolute top-[355px] left-0 h-[18px] w-3" fill="#fff" stroke="#888" aria-hidden="true">
        <path d="M.5.5v14l3.5-3 2.5 6 2-1-2.5-5.5h5z" />
      </svg>
    </div>
  );
}

/* --------------------------------------------------------------- bottom --- */

function BottomToolbar() {
  return (
    <div className="flex h-[27px] shrink-0 gap-0.5 border-b border-[#5f86bd]">
      <Toolbar className="w-[748px]">
        <Tools names={["line", "polygon", "rect", "spline", "circle", "arc", "arc3", "cloud", "measure", "height"]} />
        <Sep />
        <span className="w-0.5" />
        <Tools names={["lineColor"]} />
        <span className="flex w-3.5 justify-center">
          <Caret />
        </span>
        <Spin label="Graphic line width" value="0.001" unit="''" />
        <span className="w-1" />
        <Combo label="Graphic line style" value="" line className="w-[109px]" />
        <span className="w-0.5" />
        <Sep />
        <Tools names={["group", "ungroup", "groupAll", "groupDash", "copies"]} />
        <Sep />
        <Tools names={["toFront", "toBack", "forward", "backward", "report", "hatch"]} />
      </Toolbar>
      <Toolbar className="w-[432px]">
        <span className="flex w-[26px] justify-center font-['Liberation_Serif',serif] text-base font-bold text-[#111]">A</span>
        <Combo label="Font" value="Arial" className="w-[134px]" />
        <span className="w-1.5" />
        <Combo label="Text size" value="0.1 ''" className="w-[62px]" />
        <span className="w-1" />
        <button type="button" aria-label="Text colour" className="flex w-4 justify-center border-b-[3px] border-black font-['Liberation_Serif',serif] text-sm leading-3.5 font-bold text-[#1b2f6e]">
          A
        </button>
        <span className="flex w-4 justify-center">
          <Caret />
        </span>
        <div className="flex font-['Liberation_Serif',serif] text-sm font-bold text-[#111]">
          <button type="button" className="w-6">B</button>
          <button type="button" className="w-[23px] italic">I</button>
          <button type="button" className="w-6 underline">U</button>
        </div>
        <Sep />
        <Tools active names={["alignLeft"]} />
        <Tools names={["alignCenter", "alignRight"]} />
      </Toolbar>
    </div>
  );
}

function StatusBar() {
  return (
    <footer className="flex h-[17px] shrink-0 items-center bg-linear-to-b from-[#d7e6fb] via-[#b9d0f2] to-[#c5d9f7] pl-1.5 text-[11px] text-[#1f4484]">
      <span>Ready</span>
      <div className="ml-auto flex items-center">
        <span className="w-[91px] border-l border-[#9ab5dd] pl-1">4.8765,5.8023</span>
        <span className="w-[37px] border-l border-[#9ab5dd] pl-1">INCH</span>
        <span className="w-[25px] border-l border-[#9ab5dd] pl-[3px] text-[10px] text-[#8494b0]">CAP</span>
        <span className="w-[29px] border-l border-[#9ab5dd] pl-[3px] text-[10px] text-[#8494b0]">NUM</span>
        <span className="w-[29px] border-l border-[#9ab5dd] pl-[3px] text-[10px] text-[#8494b0]">SCRL</span>
      </div>
    </footer>
  );
}

const TASKS: { name: string; art: ReactNode; open?: boolean; focused?: boolean }[] = [
  { name: "Start", art: <path d="M1 3l6-1v6H1zM8 2l8-1v7H8zM1 9h6v6l-6-1zM8 9h8v7l-8-1z" fill="#fff" /> },
  {
    name: "Search",
    art: (
      <g fill="none" stroke="#fff" strokeWidth="1.5">
        <circle cx="9.5" cy="6" r="5" />
        <path d="M6 10l-5 5.5" />
      </g>
    ),
  },
  {
    name: "Store",
    art: (
      <>
        <path d="M1 4h14v11H1z" fill="#f2f2f2" />
        <path d="M5 4V1.5h6V4" fill="none" stroke="#4bb3e6" strokeWidth="1.5" />
        <path d="M5 6h3v3H5z" fill="#e5532d" />
        <path d="M9 6h3v3H9z" fill="#7cb518" />
        <path d="M5 10h3v3H5z" fill="#2a9df4" />
        <path d="M9 10h3v3H9z" fill="#f4b400" />
      </>
    ),
  },
  {
    name: "Mail",
    art: (
      <>
        <path d="M0 6l8-5 8 5v9H0z" fill="#1b7fd0" />
        <path d="M2 6h12l-6 5z" fill="#eaf6ff" />
        <path d="M0 6l8 6 8-6v9H0z" fill="#4cc2f1" />
      </>
    ),
  },
  {
    name: "Chrome",
    art: (
      <>
        <circle cx="8" cy="8" r="7.5" fill="#f7c52b" />
        <path d="M1.5 4.2A7.5 7.5 0 0 1 14.8 5H8L5 10z" fill="#e33b2e" />
        <path d="M1.5 4.2A7.5 7.5 0 0 0 7 15.4L10.5 10H5z" fill="#2ba24c" />
        <circle cx="8" cy="8" r="3.5" fill="#fff" />
        <circle cx="8" cy="8" r="2.7" fill="#3b78e7" />
      </>
    ),
  },
  {
    name: "Layout",
    art: (
      <>
        <path d="M0.500 0.500h15v15h-15z" fill="#e8eef2" />
        <path d="M3 3h10v10H3z" fill="#23759c" />
        <path d="M6 3h7v7H6z" fill="#bfe6f5" />
      </>
    ),
  },
  {
    name: "Explorer",
    open: true,
    art: (
      <>
        <path d="M0 2h6l1 2h8v10H0z" fill="#e9b93f" />
        <path d="M0 5h16v9H0z" fill="#fbdc7a" />
        <path d="M3 15v-5h10v5h-3v-3H6v3z" fill="#4a90c8" />
      </>
    ),
  },
  {
    name: "Pipe",
    art: (
      <>
        <path d="M4 5h8l-1 10H5z" fill="#1faa3a" />
        <path d="M2.5 1h11v4h-11z" fill="#3fe05a" />
      </>
    ),
  },
  {
    name: "Capture",
    art: (
      <text x="8" y="12" textAnchor="middle" fontSize="12" fontWeight="bold" fill="#e02a2a">
        C
      </text>
    ),
  },
  { name: "E3.cable", open: true, focused: true, art: E3_MARK },
  {
    name: "Recorder",
    open: true,
    art: (
      <g fill="#2a2d33" stroke="#c8c8c8" strokeWidth="1.2">
        <circle cx="8" cy="8" r="7" />
        <path d="M8 8C6 7 5 5 7 3M8 8c2-1 4 0 4 3M8 8c0 2-2 4-5 2" fill="none" />
      </g>
    ),
  },
  {
    name: "Player",
    open: true,
    art: (
      <>
        <path d="M1 4l14-3v3L1 6z" fill="#4cc2f1" />
        <path d="M1 5h14v10H1z" fill="#1583c9" />
        <path d="M6 7l5 3-5 3z" fill="#fff" />
      </>
    ),
  },
];

function Taskbar() {
  return (
    <nav aria-label="Taskbar" className="flex h-7 shrink-0 bg-[#19222b] text-white">
      {TASKS.map((task) => (
        <button
          key={task.name}
          type="button"
          aria-label={task.name}
          className={`flex w-[35px] items-center justify-center border-b-2 first:w-8 ${
            task.open ? "border-[#8fc6ee]" : "border-transparent"
          } ${task.focused ? "bg-[#3d454d]" : ""}`}
        >
          <svg viewBox="0 0 16 16" className="size-4" aria-hidden="true">
            {task.art}
          </svg>
        </button>
      ))}
      <div className="mr-[22px] ml-auto flex items-center gap-2">
        <svg viewBox="0 0 22 16" className="mr-3 h-4 w-[22px]" fill="none" stroke="#fff" strokeWidth="1.5" aria-hidden="true">
          <path d="M1 2h18v12H1zM19 5h2v9H3M4 5h12M4 8h5v3H4zM11 8h5M11 11h5" />
        </svg>
        <svg viewBox="0 0 12 8" className="h-2 w-3" fill="none" stroke="#fff" strokeWidth="1.5" aria-hidden="true">
          <path d="M1 7l5-5 5 5" />
        </svg>
        <svg viewBox="0 0 14 16" className="ml-0.5 h-4 w-3.5" fill="none" stroke="#fff" strokeWidth="1.2" aria-hidden="true">
          <path d="M3 5h7v7H3zM10 8l3-2v5l-3-2M4 2c2-1 4-1 6 0M4 15c2 1 4 1 6 0" />
        </svg>
        <svg viewBox="0 0 16 12" className="h-3 w-4" fill="none" stroke="#ccc" strokeWidth="1.2" aria-hidden="true">
          <path d="M5 3h9v7H5zM14 5h1.5v3H14M7 4l5 5M12 4L7 9M1 1v3h3V1M2.5 4v7" />
        </svg>
        <svg viewBox="0 0 16 16" className="size-4" fill="none" stroke="#fff" aria-hidden="true">
          <circle cx="7.5" cy="7.5" r="6.5" />
          <path d="M1 5.5h13M1 9.5h9M7.5 1c-4 4-4 9 0 13M7.5 1c3 3 3 5 3 7" />
          <circle cx="12" cy="12" r="3" fill="#19222b" />
          <path d="M10 14l4-4" />
        </svg>
        <time className="mr-3 ml-0.5 text-[11px] whitespace-nowrap">5:25 PM</time>
        <svg viewBox="0 0 16 16" className="size-4" aria-hidden="true">
          <path d="M0 1h16v11h-6l-2 3-2-3H0z" fill="#fff" />
          <path d="M3 4.5h10M3 6.5h10M3 8.5h7" stroke="#19222b" />
        </svg>
      </div>
    </nav>
  );
}

/* ------------------------------------------------------------------ app --- */

export default function App() {
  return (
    <div className="relative flex h-screen flex-col overflow-hidden border-r-2 border-l border-black bg-[#bfdbff] font-[Roboto,'Noto_Sans',sans-serif]">
      <TitleBar />
      <Toolbars />
      <div className="flex min-h-0 flex-1 gap-1 pr-0.5">
        <div className="flex min-w-0 flex-1 flex-col">
          <div className="flex min-h-0 flex-1 gap-1 pt-px">
            <div className="flex w-[228px] shrink-0 flex-col gap-[3px]">
              <SheetPanel />
              <PreviewPanel />
            </div>
            <Canvas />
          </div>
          <div className="mt-1.5 flex h-2.5 shrink-0 items-start overflow-hidden bg-[#b7cfe9] px-1 text-[11px] text-[#1f4484]">
            <h2 className="leading-3.5">Results</h2>
            <div className="ml-auto pt-0.5">
              <DockButtons />
            </div>
          </div>
        </div>
        <ComponentPanel />
      </div>
      <BottomToolbar />
      <StatusBar />
      <Taskbar />
      <ContextMenu />
    </div>
  );
}
